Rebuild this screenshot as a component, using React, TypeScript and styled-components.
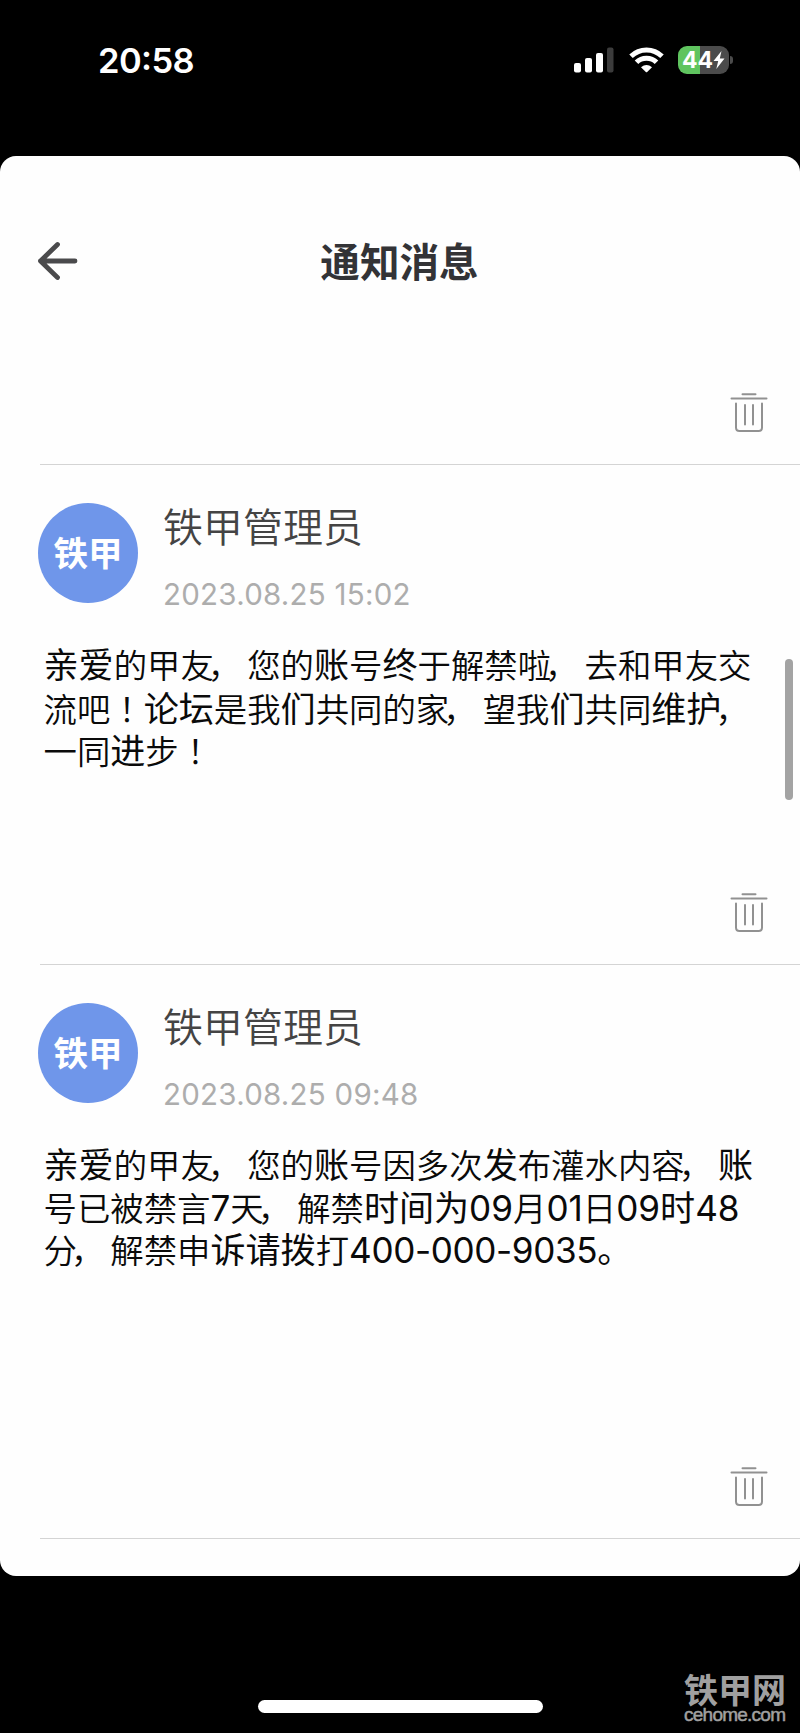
import React from "react";
import styled, { createGlobalStyle } from "styled-components";

const GlobalStyle = createGlobalStyle`
  *, *::before, *::after { box-sizing: border-box; }
  body {
    margin: 0;
    background: #000;
    font-family: Inter, "Noto Sans CJK SC", sans-serif;
  }
  h1, h2, p { margin: 0; font-weight: 400; }
  button { padding: 0; border: 0; background: none; }
`;

const Phone = styled.div`
  position: relative;
  display: flex;
  flex-direction: column;
  width: 800px;
  height: 1733px;
  overflow: hidden;
  background: #000;
`;

const StatusBar = styled.div`
  flex: none;
  display: flex;
  justify-content: space-between;
  height: 156px;
  padding: 38px 67px 0 98px;
  color: #fff;
`;

const Clock = styled.time`
  height: 45px;
  line-height: 45px;
  font-size: 34.5px;
  font-weight: 600;
  letter-spacing: -0.6px;
  font-feature-settings: "case";
`;

const StatusIcons = styled.div`
  display: flex;
  align-items: center;
  height: 43px;
`;

const SignalIcon = styled.svg`
  margin-right: 15px;
`;

const WifiIcon = styled.svg`
  margin-right: 14px;
`;

const Battery = styled.div`
  display: flex;
  align-items: center;
  justify-content: center;
  width: 51px;
  height: 28px;
  border-radius: 9px;
  background: linear-gradient(90deg, #5fc45f 0 22px, #4b4b4b 22px);
  font-size: 23px;
  font-weight: 700;
  line-height: 28px;
`;

const BatteryNub = styled.span`
  width: 3px;
  height: 8px;
  margin-left: 1px;
  border-radius: 0 3px 3px 0;
  background: #4b4b4b;
`;

const Sheet = styled.main`
  flex: none;
  display: flex;
  flex-direction: column;
  height: 1420px;
  overflow: hidden;
  border-radius: 16px;
  background: #fefefe;
`;

const Header = styled.header`
  flex: none;
  display: grid;
  grid-template-columns: 120px 1fr 120px;
  align-items: center;
  height: 212px;
`;

const BackButton = styled.button`
  display: flex;
  padding: 0 0 2px 36px;
`;

const Title = styled.h1`
  padding: 2px 1px 0 0;
  color: #333336;
  font-size: 39.6px;
  font-weight: 700;
  line-height: 60px;
  text-align: center;
`;

const Item = styled.article<{ $height: number }>`
  flex: none;
  display: flex;
  flex-direction: column;
  height: ${(p) => p.$height}px;
  margin-left: 40px;
  border-bottom: 1px solid #d4d4d4;
`;

const Sender = styled.div`
  display: flex;
  gap: 25.5px;
  margin: 38px 0 0 -2.5px;
  height: 124px;
`;

const Avatar = styled.div`
  flex: none;
  display: flex;
  align-items: center;
  justify-content: center;
  width: 100px;
  height: 100px;
  padding: 0 0 4px 1px;
  border-radius: 50%;
  background: #6f96ea;
  color: #fff;
  font-size: 34.5px;
  font-weight: 700;
`;

const SenderText = styled.div`
  display: flex;
  flex-direction: column;
`;

const Name = styled.h2`
  height: 48px;
  padding-top: 1px;
  color: #444;
  font-size: 40px;
  font-weight: 350;
  line-height: 48px;
`;

const Stamp = styled.time`
  margin-top: 21px;
  color: #adadad;
  font-size: 29.5px;
  font-weight: 400;
  line-height: 44px;
  letter-spacing: 0.25px;
`;

const Message = styled.p`
  margin: 17px 0 0 3.5px;
  color: #0a0a0a;
`;

const Line = styled.span`
  display: block;
  height: 42.6px;
  line-height: 42.6px;
  white-space: nowrap;
`;

const Run = styled.span<{ $strong?: boolean }>`
  font-size: ${(p) => (p.$strong ? 35.1 : 33.4)}px;
  font-weight: ${(p) => (p.$strong ? 400 : 350)};
`;

const PhoneNumber = styled(Run)`
  letter-spacing: -0.35px;
`;

/* Full-width comma set tight against the preceding character. */
const Comma = styled.span`
  margin: 0 6px 0 -6px;
`;

/* Full-width exclamation mark centred in its cell. */
const Exclamation = styled.span`
  font-family: "Noto Sans CJK TC", sans-serif;
`;

const DeleteButton = styled.button`
  display: flex;
  margin: auto 32px 31px auto;
`;

const HomeIndicator = styled.div`
  width: 285px;
  height: 13px;
  margin: 124px auto 0;
  border-radius: 7px;
  background: #fff;
`;

const ScrollThumb = styled.div`
  position: absolute;
  top: 659px;
  right: 7.5px;
  width: 7.5px;
  height: 141px;
  border-radius: 4px;
  background: #a3a3a3;
`;

const Watermark = styled.div`
  position: absolute;
  right: 14px;
  bottom: 10px;
  width: 102px;
  color: #a0a0a0;
  white-space: nowrap;
`;

const WatermarkName = styled.div`
  height: 33px;
  font-size: 34px;
  font-weight: 700;
  line-height: 34px;
`;

const WatermarkSite = styled.div`
  height: 16px;
  font-family: "Liberation Sans", sans-serif;
  font-size: 19px;
  line-height: 16px;
  letter-spacing: -0.75px;
  -webkit-text-stroke: 0.5px #a0a0a0;
`;

type Part = string | { s: string } | { phone: string };

const firstMessage: Part[][] = [
  [{ s: "亲爱" }, "的甲友，您的", { s: "账" }, "号", { s: "终" }, "于解禁啦，去和甲友交"],
  ["流吧！", { s: "论坛" }, "是我", { s: "们" }, "共同的家，望我", { s: "们" }, "共同", { s: "维护" }, "，"],
  ["一同", { s: "进" }, "步！"],
];

const secondMessage: Part[][] = [
  [{ s: "亲爱" }, "的甲友，您的", { s: "账" }, "号因多次", { s: "发" }, "布灌水内容，", { s: "账" }],
  ["号已被禁言", { s: "7" }, "天，解禁", { s: "时间为09" }, "月", { s: "01" }, "日", { s: "09时48" }],
  ["分，解禁申", { s: "诉请拨" }, "打", { phone: "400-000-9035。" }],
];

function Punctuated({ text }: { text: string }) {
  return (
    <>
      {text.split(/([，！])/).map((piece, i) => {
        if (piece === "，") return <Comma key={i}>{piece}</Comma>;
        if (piece === "！") return <Exclamation key={i}>{piece}</Exclamation>;
        return piece;
      })}
    </>
  );
}

function MessagePart({ part }: { part: Part }) {
  if (typeof part === "string") {
    return (
      <Run>
        <Punctuated text={part} />
      </Run>
    );
  }
  if ("phone" in part) return <PhoneNumber $strong>{part.phone}</PhoneNumber>;
  return <Run $strong>{part.s}</Run>;
}

function Trash() {
  return (
    <DeleteButton aria-label="删除">
      <svg width="38" height="40" viewBox="0 0 38 40" fill="none" stroke="#919191" strokeWidth="2" strokeLinecap="round">
        <path d="M12.5 1.2H25.5M1.5 5.5H36.5M6 10.5V34.5Q6 38 9.5 38H28.5Q32 38 32 34.5V10.5M15 12V31.5M23 12V31.5" />
      </svg>
    </DeleteButton>
  );
}

function Notification({ time, lines, height }: { time: string; lines: Part[][]; height: number }) {
  return (
    <Item $height={height}>
      <Sender>
        <Avatar>铁甲</Avatar>
        <SenderText>
          <Name>铁甲管理员</Name>
          <Stamp>{time}</Stamp>
        </SenderText>
      </Sender>
      <Message>
        {lines.map((parts, i) => (
          <Line key={i}>
            {parts.map((part, j) => (
              <MessagePart key={j} part={part} />
            ))}
          </Line>
        ))}
      </Message>
      <Trash />
    </Item>
  );
}

export default function App() {
  return (
    <Phone>
      <GlobalStyle />
      <StatusBar>
        <Clock>20:58</Clock>
        <StatusIcons>
          <SignalIcon width="40" height="26" viewBox="0 0 40 26" fill="#fff">
            <rect x="0" y="16" width="7" height="9.5" rx="2" />
            <rect x="11" y="11" width="7" height="14.5" rx="2" />
            <rect x="22" y="6" width="7" height="19.5" rx="2" />
            <rect x="33" y="0.5" width="6.5" height="25" rx="2" fill="#3c3c3c" />
          </SignalIcon>
          <WifiIcon width="35" height="26" viewBox="0 0 35 26" fill="none" stroke="#fff" strokeWidth="5">
            <path d="M2 9.3Q8.5 3 17.5 3T33 9.3" />
            <path d="M7.5 15.3Q11.5 11.3 17.5 11.3T27.5 15.3" />
            <path d="M12 20.2Q17.5 15.8 23 20.2L18.2 25Q17.5 25.6 16.8 25Z" fill="#fff" stroke="none" />
          </WifiIcon>
          <Battery>
            44
            <svg width="12" height="18" viewBox="0 0 12 18" fill="#fff">
              <path d="M8.5 0L0.5 10H5.2L3.3 18L11.5 7.5H6.8Z" />
            </svg>
          </Battery>
          <BatteryNub />
        </StatusIcons>
      </StatusBar>
      <Sheet>
        <Header>
          <BackButton aria-label="返回">
            <svg width="42" height="40" viewBox="0 0 42 40" fill="none" stroke="#4a4a4c" strokeWidth="4.8" strokeLinecap="round" strokeLinejoin="round">
              <path d="M21.5 3.5L4.5 20L21.5 36.5M4.5 20H39" />
            </svg>
          </BackButton>
          <Title>通知消息</Title>
        </Header>
        <Item $height={97}>
          <Trash />
        </Item>
        <Notification time="2023.08.25 15:02" lines={firstMessage} height={500} />
        <Notification time="2023.08.25 09:48" lines={secondMessage} height={574} />
      </Sheet>
      <HomeIndicator />
      <ScrollThumb />
      <Watermark>
        <WatermarkName>铁甲网</WatermarkName>
        <WatermarkSite>cehome.com</WatermarkSite>
      </Watermark>
    </Phone>
  );
}
